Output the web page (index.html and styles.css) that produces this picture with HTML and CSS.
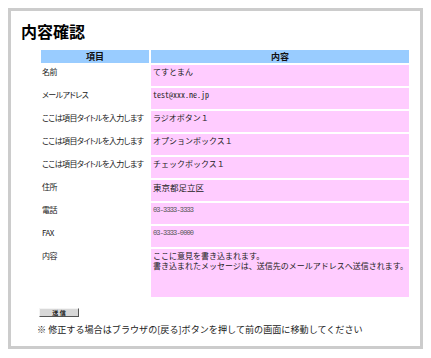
FILE: index.html
```html
<!DOCTYPE html>
<html lang="ja">
<head>
<meta charset="utf-8">
<link rel="stylesheet" href="styles.css">
</head>
<body>
<div class="frame">
  <h1 class="title">内容確認</h1>
  <table class="confirm">
    <tr class="head"><th class="c1">項目</th><th class="c2">内容</th></tr>
    <tr><td class="label">名前</td><td class="value">てすとまん</td></tr>
    <tr><td class="label">メールアドレス</td><td class="value latin">test@xxx.ne.jp</td></tr>
    <tr><td class="label">ここは項目タイトルを入力します</td><td class="value">ラジオボタン１</td></tr>
    <tr><td class="label">ここは項目タイトルを入力します</td><td class="value">オプションボックス１</td></tr>
    <tr><td class="label">ここは項目タイトルを入力します</td><td class="value">チェックボックス１</td></tr>
    <tr><td class="label">住所</td><td class="value prop">東京都足立区</td></tr>
    <tr><td class="label">電話</td><td class="value num">03-3333-3333</td></tr>
    <tr><td class="label">FAX</td><td class="value num">03-3333-0000</td></tr>
    <tr class="tall"><td class="label">内容</td><td class="value">ここに意見を書き込まれます。<br>書き込まれたメッセージは、送信先のメールアドレスへ送信されます。</td></tr>
  </table>
  <div class="actions"><button class="send" type="button">送 信</button></div>
  <p class="note">※ 修正する場合はブラウザの[戻る]ボタンを押して前の画面に移動してください</p>
</div>
</body>
</html>
```

FILE: styles.css
```css
html, body {
  margin: 0;
  padding: 0;
  background: #fff;
}
body {
  padding: 8px;
  font-family: "Noto Sans CJK JP", "Noto Sans", sans-serif;
  color: #111;
}
.frame {
  border: 3px solid #cccccc;
  padding: 10px 0 0 10px;
  box-sizing: border-box;
  height: 341px;
}
.title {
  margin: 0;
  font-size: 16px;
  line-height: 20px;
  font-weight: bold;
  color: #000;
}
.confirm {
  margin: 7px 0 0 18px;
  border-collapse: separate;
  border-spacing: 2px;
  width: 372px;
  table-layout: fixed;
}
.confirm th,
.confirm td {
  padding: 0;
}
.head th {
  background: #99ccff;
  height: 13px;
  font-size: 9px;
  line-height: 13px;
  font-weight: bold;
  text-align: center;
  color: #111;
}
.c1 { width: 108px; }
.c2 { width: 258px; }
.confirm td {
  height: 21px;
  vertical-align: top;
  box-sizing: border-box;
}
.confirm td.label {
  font-size: 8px;
  line-height: 11px;
  padding: 1px 0 0 1px;
  font-feature-settings: "palt";
  letter-spacing: -0.6px;
  color: #222;
  white-space: nowrap;
  overflow: hidden;
}
.confirm td.value {
  background: #ffccff;
  font-size: 8px;
  line-height: 10px;
  padding: 2px 0 0 2px;
  color: #222;
}
.confirm td.latin {
  font-feature-settings: "hwid";
}
.confirm td.prop {
  font-feature-settings: "palt";
  font-size: 8.5px;
}
.confirm td.num {
  font-family: "Liberation Mono", monospace;
  font-size: 7px;
  letter-spacing: -0.85px;
  color: #555;
}
.confirm tr.tall td {
  height: 48px;
}
.actions {
  margin: 9px 0 0 18px;
}
.send {
  width: 40px;
  height: 9px;
  padding: 0;
  margin: 0;
  background: #d8d8d8;
  border: 1px solid;
  border-color: #f4f4f4 #555 #555 #f4f4f4;
  font-family: "Noto Sans CJK JP", sans-serif;
  font-size: 6px;
  line-height: 6px;
  font-weight: bold;
  color: #222;
  display: block;
}
.note {
  margin: 7px 0 0 16px;
  font-size: 9.1px;
  line-height: 11px;
  color: #222;
}
```
